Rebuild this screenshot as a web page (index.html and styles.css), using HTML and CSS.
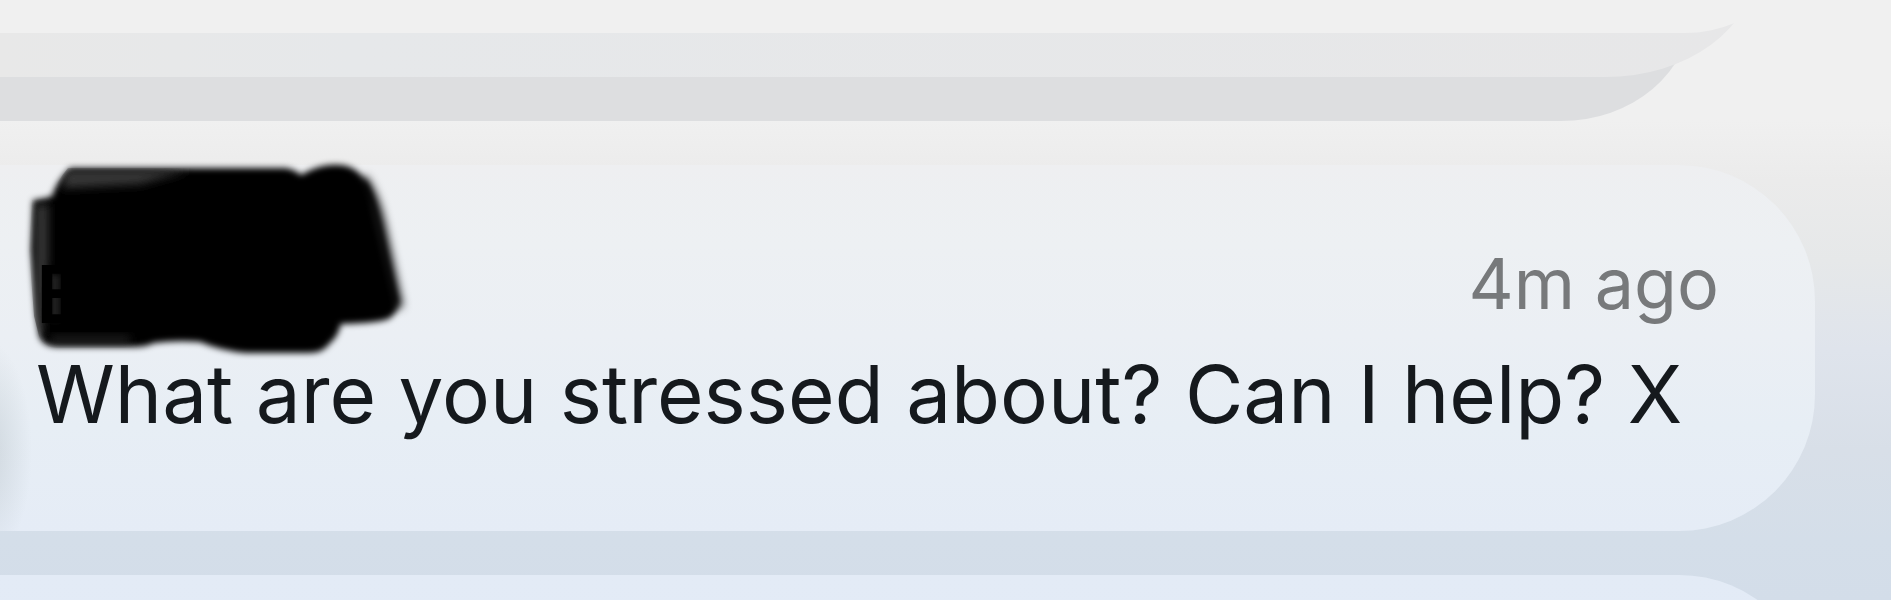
FILE: index.html
```html
<!DOCTYPE html>
<html lang="en">
<head>
    <meta charset="UTF-8" />
    <meta name="viewport" content="width=device-width, initial-scale=1.0"/>
    <title>Notifications</title>
    <link rel="stylesheet" href="styles.css">
</head>
<body>
    <main class="screen">
        <!-- collapsed group, back sheet first -->
        <div class="pile">
            <div class="sheet back"></div>
            <div class="sheet middle"></div>
            <div class="sheet front"></div>
        </div>

        <article class="card">
            <header class="card-top">
                <h1 class="sender">
                    <svg class="scribble" viewBox="0 0 440 220" aria-hidden="true">
                        <defs>
                            <filter id="soft" x="-10%" y="-10%" width="120%" height="120%">
                                <feGaussianBlur stdDeviation="3"/>
                            </filter>
                            <filter id="softer" x="-50%" y="-50%" width="200%" height="200%">
                                <feGaussianBlur stdDeviation="5"/>
                            </filter>
                            <clipPath id="ink">
                                <path d="M68 28H286Q296 30 301 34Q316 26 330 25Q354 22 366 34Q377 46 382 68L405 165Q407 174 396 180Q386 184 344 184Q340 199 334 205Q328 213 312 213H246Q222 211 200 202Q176 200 154 204Q146 208 134 208H58Q43 208 39 196L34 176L29 110L32 60Q44 59 52 56Q56 42 68 28Z"/>
                            </clipPath>
                        </defs>
                        <path filter="url(#soft)" d="M70 28H286Q296 30 301 35Q316 26 330 25Q350 23 360 34Q370 46 374 68L396 160Q400 170 390 178Q382 183 341 184Q338 197 330 203Q324 213 308 213H246Q222 211 200 202Q176 200 154 203Q146 207 134 207H58Q43 207 39 196L36 176L31 110L33 60Q44 59 52 56Q56 42 70 28Z"/>
                        <path class="edge" filter="url(#softer)" d="M360 40Q372 56 378 84L396 168"/>
                        <g class="thin-ink" clip-path="url(#ink)">
                            <path filter="url(#softer)" d="M66 30H190L140 44L62 48Z"/>
                            <path filter="url(#softer)" d="M36 64H48V118L42 196H34Z"/>
                            <path filter="url(#soft)" d="M50 134H60V180H50Z" opacity=".6"/>
                            <path filter="url(#softer)" d="M50 196H130V204H50Z" opacity=".6"/>
                        </g>
                    </svg>
                    <span class="name">E</span>
                </h1>
                <time class="time">4m ago</time>
            </header>
            <p class="message">What are you stressed about? Can I help? X</p>
        </article>

        <article class="card next"></article>
    </main>
</body>
</html>
```
FILE: styles.css
```css
body {
    margin: 0;
    font-family: Inter, "Liberation Sans", sans-serif;
    color: #15191d;
    overflow: hidden;
}

.screen {
    height: 100vh;
    overflow: hidden;
    background: linear-gradient(180deg, #f0f0f0 0, #f0f0f0 120px, #ebebeb 180px, #e6e8e9 260px, #dfe4ec 350px, #d8dfe8 450px, #d4dee9 540px, #d3dde9 600px);
}

.pile {
    display: grid;
    margin-top: -200px;
    margin-bottom: 44px;
}

.sheet {
    grid-area: 1 / 1;
    align-self: start;
}

.back {
    height: 321px;
    margin-right: 200px;
    background: #dddee0;
    border-bottom-right-radius: 130px 110px;
}

.middle {
    height: 277px;
    margin-right: 136px;
    background: linear-gradient(90deg, #e8e8e8, #e6e8ea 20%, #e7e7e8);
    border-bottom-right-radius: 150px 110px;
}

.front {
    height: 233px;
    margin-right: 76px;
    background: #f0f0f0;
    border-bottom-right-radius: 130px;
}

.card {
    box-sizing: border-box;
    margin-right: 76px;
    margin-bottom: 44px;
    padding: 79px 96px 87px 36px;
    border-radius: 0 136px 136px 0;
    background:
        radial-gradient(ellipse 44px 110px at -12px 286px, rgba(170, 180, 185, 0.4), transparent),
        linear-gradient(180deg, #eeeff1 0, #edf0f3 80px, #ebeff4 170px, #e7eef5 260px, #e5ecf6 366px);
}

.card-top {
    display: flex;
    justify-content: space-between;
    align-items: flex-start;
}

.sender {
    position: relative;
    margin: 0;
    font-size: 80px;
    line-height: 100px;
    font-weight: 600;
    color: #000;
}

.name {
    position: relative;
}

/* brush marks over the sender name */
.scribble {
    position: absolute;
    left: -36px;
    top: -104px;
    width: 440px;
    height: 220px;
}

.edge {
    fill: none;
    stroke: #000;
    stroke-width: 14;
}

.thin-ink {
    fill: #383838;
}

.time {
    font-size: 70px;
    line-height: 80px;
    color: #77797b;
}

.message {
    margin: 0;
    font-size: 80px;
    line-height: 100px;
    white-space: nowrap;
}

.next {
    height: 366px;
    background: linear-gradient(180deg, #e3ebf6, #dfe9f5);
}
```
